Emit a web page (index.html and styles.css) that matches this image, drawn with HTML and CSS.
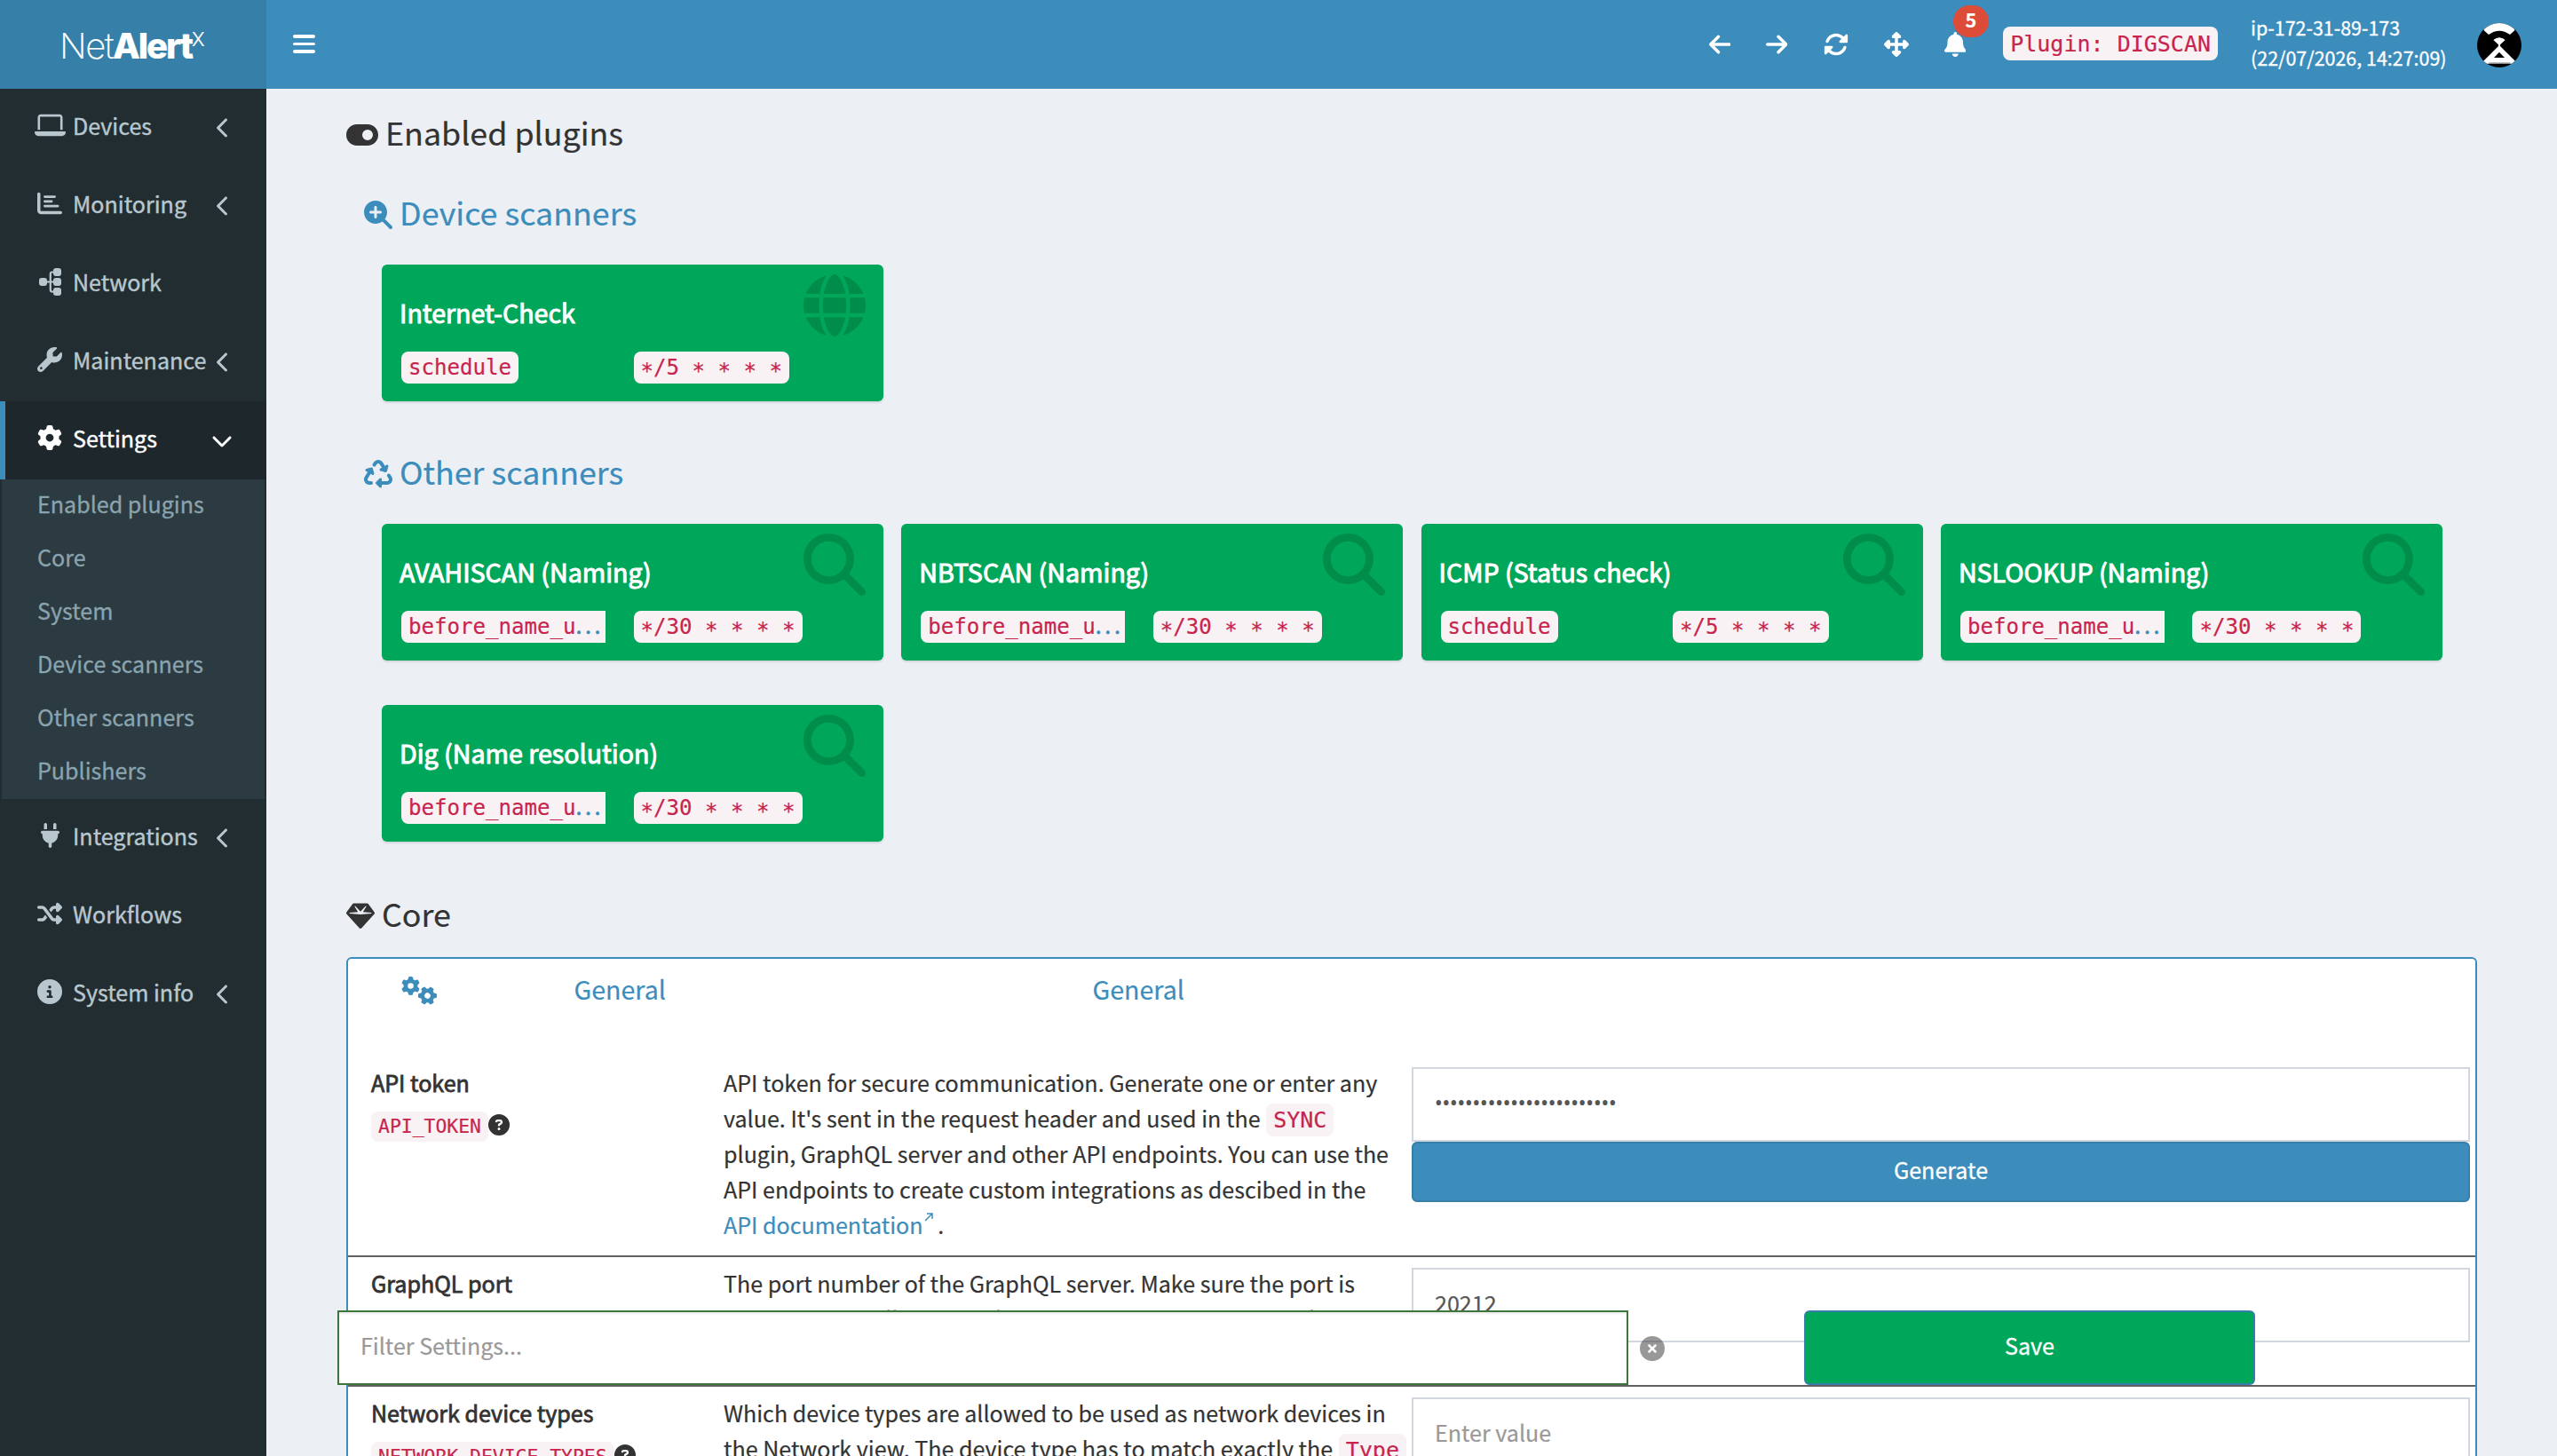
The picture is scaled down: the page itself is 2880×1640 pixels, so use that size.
FILE: index.html
```html
<!DOCTYPE html>
<html lang="en">
<head>
<meta charset="utf-8">
<title>NetAlertX</title>
<link rel="stylesheet" href="styles.css">
</head>
<body>
<svg class="sprite" width="0" height="0">
  <symbol id="laptop" viewBox="0 0 640 512"><path d="M128 32C92.7 32 64 60.7 64 96V352h48V80H528V352h48V96c0-35.3-28.7-64-64-64H128zM19.2 384C8.6 384 0 392.6 0 403.2C0 445.6 34.4 480 76.8 480H563.2c42.4 0 76.8-34.4 76.8-76.8c0-10.6-8.6-19.2-19.2-19.2H19.2z"/></symbol>
  <symbol id="chart" viewBox="0 0 512 512"><path d="M32 32c17.7 0 32 14.3 32 32V400c0 8.8 7.2 16 16 16H480c17.7 0 32 14.3 32 32s-14.3 32-32 32H80c-44.2 0-80-35.8-80-80V64C0 46.3 14.3 32 32 32zM152 96H360a24 24 0 0 1 0 48H152a24 24 0 0 1 0-48zm0 96H296a24 24 0 0 1 0 48H152a24 24 0 0 1 0-48zm0 96H424a24 24 0 0 1 0 48H152a24 24 0 0 1 0-48z"/></symbol>
  <symbol id="network" viewBox="0 0 25 31"><rect y="11" width="9" height="9" rx="3"/><rect x="16" width="9" height="9" rx="3"/><rect x="16" y="11" width="9" height="9" rx="3"/><rect x="16" y="22" width="9" height="9" rx="3"/><path d="M8 15.5h9M17 4.5h-2.2q-2 0-2 2v18q0 2 2 2H17" fill="none" stroke="currentColor" stroke-width="2.2"/></symbol>
  <symbol id="wrench" viewBox="0 0 512 512"><path fill-rule="evenodd" d="M352 320c88.4 0 160-71.6 160-160c0-15.3-2.2-30.1-6.2-44.2c-3.1-10.8-16.4-13.2-24.3-5.3l-76.8 76.8c-3 3-7.1 4.7-11.3 4.7H336c-8.8 0-16-7.2-16-16V118.6c0-4.2 1.7-8.3 4.7-11.3l76.8-76.8c7.9-7.9 5.4-21.2-5.3-24.3C382.1 2.2 367.3 0 352 0C263.6 0 192 71.6 192 160c0 19.1 3.4 37.5 9.5 54.5L19.9 396.1C7.2 408.8 0 426.1 0 444.1C0 481.6 30.4 512 67.9 512c18 0 35.3-7.2 48-19.9L297.5 310.5c17 6.2 35.4 9.5 54.5 9.5zM80 408a24 24 0 1 1 0 48 24 24 0 1 1 0-48z"/></symbol>
  <symbol id="gear" viewBox="0 0 512 512"><path fill-rule="evenodd" d="M495.9 166.6c3.2 8.7 .5 18.4-6.4 24.6l-43.3 39.4c1.1 8.3 1.7 16.8 1.7 25.4s-.6 17.1-1.7 25.4l43.3 39.4c6.9 6.2 9.6 15.9 6.4 24.6c-4.4 11.9-9.7 23.3-15.8 34.3l-4.7 8.1c-6.6 11-14 21.4-22.1 31.2c-5.9 7.2-15.7 9.6-24.5 6.8l-55.7-17.7c-13.4 10.3-28.2 18.9-44 25.4l-12.5 57.1c-2 9.1-9 16.3-18.2 17.8c-13.8 2.3-28 3.5-42.5 3.5s-28.7-1.2-42.5-3.5c-9.2-1.5-16.2-8.7-18.2-17.8l-12.5-57.1c-15.8-6.5-30.6-15.1-44-25.4L83.1 425.9c-8.8 2.8-18.6 .3-24.5-6.8c-8.1-9.8-15.5-20.2-22.1-31.2l-4.7-8.1c-6.1-11-11.4-22.4-15.8-34.3c-3.2-8.7-.5-18.4 6.4-24.6l43.3-39.4C64.6 273.1 64 264.6 64 256s.6-17.1 1.7-25.4L22.4 191.2c-6.9-6.2-9.6-15.9-6.4-24.6c4.4-11.9 9.7-23.3 15.8-34.3l4.7-8.1c6.6-11 14-21.4 22.1-31.2c5.9-7.2 15.7-9.6 24.5-6.8l55.7 17.7c13.4-10.3 28.2-18.9 44-25.4l12.5-57.1c2-9.1 9-16.3 18.2-17.8C227.3 1.2 241.5 0 256 0s28.7 1.2 42.5 3.5c9.2 1.5 16.2 8.7 18.2 17.8l12.5 57.1c15.8 6.5 30.6 15.1 44 25.4l55.7-17.7c8.8-2.8 18.6-.3 24.5 6.8c8.1 9.8 15.5 20.2 22.1 31.2l4.7 8.1c6.1 11 11.4 22.4 15.8 34.3zM256 336a80 80 0 1 0 0-160 80 80 0 1 0 0 160z"/></symbol>
  <symbol id="gears" viewBox="0 0 40 32"><use href="#gear" width="21" height="21"/><g transform="rotate(30 29.5 21.5)"><use href="#gear" x="19" y="11" width="21" height="21"/></g></symbol>
  <symbol id="plug" viewBox="0 0 384 512"><path d="M96 0C78.3 0 64 14.3 64 32v96h64V32c0-17.7-14.3-32-32-32zM288 0c-17.7 0-32 14.3-32 32v96h64V32c0-17.7-14.3-32-32-32zM32 160c-17.7 0-32 14.3-32 32s14.3 32 32 32v32c0 77.4 55 142 128 156.8V480c0 17.7 14.3 32 32 32s32-14.3 32-32V412.8C297 398 352 333.4 352 256V224c17.7 0 32-14.3 32-32s-14.3-32-32-32H32z"/></symbol>
  <symbol id="shuffle" viewBox="0 0 512 512"><path d="M403.8 34.4c12-5 25.7-2.2 34.9 6.9l64 64c6 6 9.4 14.1 9.4 22.6s-3.4 16.6-9.4 22.6l-64 64c-9.2 9.2-22.9 11.9-34.9 6.9s-19.8-16.6-19.8-29.6V160H352c-10.1 0-19.6 4.7-25.6 12.8L284 229.3 244 176l31.2-41.6C293.3 110.2 321.8 96 352 96h32V64c0-12.9 7.8-24.6 19.8-29.6zM164 282.7L204 336l-31.2 41.6C154.7 401.8 126.2 416 96 416H32c-17.7 0-32-14.3-32-32s14.3-32 32-32H96c10.1 0 19.6-4.7 25.6-12.8L164 282.7zm274.6 188c-9.2 9.2-22.9 11.9-34.9 6.9s-19.8-16.6-19.8-29.6V416H352c-30.2 0-58.7-14.2-76.8-38.4L121.6 172.8c-6-8.1-15.5-12.8-25.6-12.8H32c-17.7 0-32-14.3-32-32s14.3-32 32-32H96c30.2 0 58.7 14.2 76.8 38.4L326.4 339.2c6 8.1 15.5 12.8 25.6 12.8h32V320c0-12.9 7.8-24.6 19.8-29.6s25.7-2.2 34.9 6.9l64 64c6 6 9.4 14.1 9.4 22.6s-3.4 16.6-9.4 22.6l-64 64z"/></symbol>
  <symbol id="info" viewBox="0 0 512 512"><path fill-rule="evenodd" d="M256 512A256 256 0 1 0 256 0a256 256 0 1 0 0 512zM216 336h24V272H216c-13.3 0-24-10.7-24-24s10.7-24 24-24h48c13.3 0 24 10.7 24 24v88h8c13.3 0 24 10.7 24 24s-10.7 24-24 24H216c-13.3 0-24-10.7-24-24s10.7-24 24-24zm40-208a32 32 0 1 1 0 64 32 32 0 1 1 0-64z"/></symbol>
  <symbol id="question" viewBox="0 0 512 512"><path fill-rule="evenodd" d="M256 512A256 256 0 1 0 256 0a256 256 0 1 0 0 512zM169.8 165.3c7.9-22.3 29.1-37.3 52.8-37.3h58.3c34.9 0 63.1 28.3 63.1 63.1c0 22.6-12.1 43.5-31.7 54.8L280 264.4c-.2 13-10.9 23.6-24 23.6c-13.3 0-24-10.7-24-24V250.5c0-8.6 4.6-16.5 12.1-20.8l44.3-25.4c4.7-2.7 7.6-7.7 7.6-13.1c0-8.4-6.8-15.1-15.1-15.1H222.6c-3.4 0-6.4 2.1-7.5 5.3l-.4 1.2c-4.4 12.5-18.2 19-30.6 14.6s-19-18.2-14.6-30.6l.4-1.2zM224 352a32 32 0 1 1 64 0 32 32 0 1 1 -64 0z"/></symbol>
  <symbol id="xmark" viewBox="0 0 512 512"><path fill-rule="evenodd" d="M256 512A256 256 0 1 0 256 0a256 256 0 1 0 0 512zM175 175c9.4-9.4 24.6-9.4 33.9 0l47 47 47-47c9.4-9.4 24.6-9.4 33.9 0s9.4 24.6 0 33.9l-47 47 47 47c9.4 9.4 9.4 24.6 0 33.9s-24.6 9.4-33.9 0l-47-47-47 47c-9.4 9.4-24.6 9.4-33.9 0s-9.4-24.6 0-33.9l47-47-47-47c-9.4-9.4-9.4-24.6 0-33.9z"/></symbol>
  <symbol id="left" viewBox="0 0 320 512"><path d="M41.4 233.4c-12.5 12.5-12.5 32.8 0 45.3l192 192c12.5 12.5 32.8 12.5 45.3 0s12.5-32.8 0-45.3L109.3 256 278.6 86.6c12.5-12.5 12.5-32.8 0-45.3s-32.8-12.5-45.3 0l-192 192z"/></symbol>
  <symbol id="down" viewBox="0 0 512 512"><path d="M233.4 406.6c12.5 12.5 32.8 12.5 45.3 0l192-192c12.5-12.5 12.5-32.8 0-45.3s-32.8-12.5-45.3 0L256 338.7 86.6 169.4c-12.5-12.5-32.8-12.5-45.3 0s-12.5 32.8 0 45.3l192 192z"/></symbol>
  <symbol id="arrow" viewBox="0 0 448 512"><path d="M9.4 233.4c-12.5 12.5-12.5 32.8 0 45.3l160 160c12.5 12.5 32.8 12.5 45.3 0s12.5-32.8 0-45.3L109.2 288 416 288c17.7 0 32-14.3 32-32s-14.3-32-32-32l-306.7 0L214.6 118.6c12.5-12.5 12.5-32.8 0-45.3s-32.8-12.5-45.3 0l-160 160z"/></symbol>
  <symbol id="rotate" viewBox="0 0 512 512"><path d="M142.9 142.9c62.2-62.2 162.7-62.5 225.3-1L327 183c-6.9 6.9-8.9 17.2-5.2 26.2s12.5 14.8 22.2 14.8H472c13.3 0 24-10.7 24-24V72c0-9.7-5.8-18.5-14.8-22.2s-19.3-1.7-26.2 5.2L413.4 96.6c-87.6-86.5-228.7-86.2-315.8 1C73.2 122 55.6 150.7 44.8 181.4c-5.9 16.7 2.9 34.9 19.5 40.8s34.9-2.9 40.8-19.5c7.7-21.8 20.2-42.3 37.8-59.8zM16 312V440c0 9.7 5.8 18.5 14.8 22.2s19.3 1.7 26.2-5.2l41.6-41.6c87.6 86.5 228.7 86.2 315.8-1c24.4-24.4 42.1-53.1 52.9-83.7c5.9-16.7-2.9-34.9-19.5-40.8s-34.9 2.9-40.8 19.5c-7.7 21.8-20.2 42.3-37.8 59.8c-62.2 62.2-162.7 62.5-225.3 1L185 329c6.9-6.9 8.9-17.2 5.2-26.2s-12.5-14.8-22.2-14.8H40c-13.3 0-24 10.7-24 24z"/></symbol>
  <symbol id="move" viewBox="0 0 512 512"><path d="M278.6 9.4c-12.5-12.5-32.8-12.5-45.3 0l-64 64c-9.2 9.2-11.9 22.9-6.9 34.9s16.6 19.8 29.6 19.8h32v96H128V192c0-12.9-7.8-24.6-19.8-29.6s-25.7-2.2-34.9 6.9l-64 64c-12.5 12.5-12.5 32.8 0 45.3l64 64c9.2 9.2 22.9 11.9 34.9 6.9s19.8-16.6 19.8-29.6V288h96v96H192c-12.9 0-24.6 7.8-29.6 19.8s-2.2 25.7 6.9 34.9l64 64c12.5 12.5 32.8 12.5 45.3 0l64-64c9.2-9.2 11.9-22.9 6.9-34.9s-16.6-19.8-29.6-19.8H288V288h96v32c0 12.9 7.8 24.6 19.8 29.6s25.7 2.2 34.9-6.9l64-64c12.5-12.5 12.5-32.8 0-45.3l-64-64c-9.2-9.2-22.9-11.9-34.9-6.9s-19.8 16.6-19.8 29.6v32H288V128h32c12.9 0 24.6-7.8 29.6-19.8s2.2-25.7-6.9-34.9l-64-64z"/></symbol>
  <symbol id="bell" viewBox="0 0 448 512"><path d="M224 0c-17.7 0-32 14.3-32 32V51.2C119 66 64 130.6 64 208v18.8c0 47-17.3 92.4-48.5 127.6l-7.4 8.3c-8.4 9.4-10.4 22.9-5.3 34.4S19.4 416 32 416H416c12.6 0 24-7.4 29.2-18.9s3.1-25-5.3-34.4l-7.4-8.3C401.3 319.2 384 273.9 384 226.8V208c0-77.4-55-142-128-156.8V32c0-17.7-14.3-32-32-32zm45.3 493.3c12-12 18.7-28.3 18.7-45.3H224 160c0 17 6.7 33.3 18.7 45.3s28.3 18.7 45.3 18.7s33.3-6.7 45.3-18.7z"/></symbol>
  <symbol id="toggle" viewBox="0 0 576 512"><path fill-rule="evenodd" d="M192 64C86 64 0 150 0 256S86 448 192 448H384c106 0 192-86 192-192s-86-192-192-192H192zm192 96a96 96 0 1 1 0 192 96 96 0 1 1 0-192z"/></symbol>
  <symbol id="zoom-in" viewBox="0 0 512 512"><path fill-rule="evenodd" d="M416 208c0 45.9-14.9 88.3-40 122.7L502.6 457.4c12.5 12.5 12.5 32.8 0 45.3s-32.8 12.5-45.3 0L330.7 376c-34.4 25.2-76.8 40-122.7 40C93.1 416 0 322.9 0 208S93.1 0 208 0S416 93.1 416 208zM184 296c0 13.3 10.7 24 24 24s24-10.7 24-24V232h64c13.3 0 24-10.7 24-24s-10.7-24-24-24H232V120c0-13.3-10.7-24-24-24s-24 10.7-24 24v64H120c-13.3 0-24 10.7-24 24s10.7 24 24 24h64v64z"/></symbol>
  <symbol id="search" viewBox="0 0 512 512"><path fill-rule="evenodd" d="M416 208c0 45.9-14.9 88.3-40 122.7L502.6 457.4c12.5 12.5 12.5 32.8 0 45.3s-32.8 12.5-45.3 0L330.7 376c-34.4 25.2-76.8 40-122.7 40C93.1 416 0 322.9 0 208S93.1 0 208 0S416 93.1 416 208zM208 352a144 144 0 1 0 0-288 144 144 0 1 0 0 288z"/></symbol>
  <symbol id="recycle" viewBox="0 0 512 512"><path d="M174.7 45.1C192.2 17 223 0 256 0s63.8 17 81.3 45.1l38.6 61.7 27-15.6c8.4-4.9 18.9-4.2 26.6 1.7s11.1 15.9 8.6 25.3l-23.4 87.4c-3.4 12.8-16.6 20.4-29.4 17l-87.4-23.4c-9.4-2.5-16.3-10.4-17.6-20s3.4-19.1 11.8-23.9l28.4-16.4L283 79c-5.8-9.3-16-15-27-15s-21.2 5.7-27 15l-17.5 28c-9.2 14.8-28.6 19.5-43.6 10.5c-15.3-9.2-20.2-29.2-10.7-44.4l17.5-28zM429.5 251.9c15-9 34.4-4.3 43.6 10.5l24.4 39.1c9.4 15.1 14.4 32.4 14.6 50.2c.3 53.1-42.7 96.4-95.8 96.4L320 448v32c0 9.7-5.8 18.5-14.8 22.2s-19.3 1.7-26.2-5.2l-64-64c-9.4-9.4-9.4-24.6 0-33.9l64-64c6.9-6.9 17.2-8.9 26.2-5.2s14.8 12.5 14.8 22.2v32l96.2 0c17.6 0 31.9-14.4 31.8-32c0-5.9-1.7-11.7-4.8-16.7l-24.4-39.1c-9.5-15.2-4.7-35.2 10.7-44.4zm-364.6-31L36 204.2c-8.4-4.9-13.1-14.3-11.8-23.9s8.2-17.5 17.6-20l87.4-23.4c12.8-3.4 26 4.2 29.4 17L182 241.2c2.5 9.4-.9 19.3-8.6 25.3s-18.2 6.6-26.6 1.7l-26.5-15.3L68.8 335.3c-3.1 5-4.8 10.8-4.8 16.7c-.1 17.6 14.2 32 31.8 32l32.2 0c17.7 0 32 14.3 32 32s-14.3 32-32 32l-32.2 0C42.7 448-.3 404.8 0 351.6c.1-17.8 5.1-35.1 14.6-50.2l50.3-80.5z"/></symbol>
  <symbol id="gem" viewBox="0 0 512 512"><path fill-rule="evenodd" d="M116.7 33.8c4.5-6.1 11.7-9.8 19.3-9.8H376c7.6 0 14.8 3.6 19.3 9.8l112 152c6.8 9.2 6.1 21.9-1.5 30.4l-232 256c-4.5 5-11 7.9-17.8 7.9s-13.2-2.9-17.8-7.9l-232-256c-7.7-8.5-8.3-21.2-1.5-30.4l112-152zm38.5 39.8c-3.3 2.5-4.2 7-2.1 10.5l57.4 95.6L63.3 192c-4.1 .3-7.3 3.8-7.3 8s3.2 7.6 7.3 8l192 16c.4 0 .9 0 1.3 0l192-16c4.1-.3 7.3-3.8 7.3-8s-3.2-7.6-7.3-8L301.5 179.8l57.4-95.6c2.1-3.5 1.2-8.1-2.1-10.5s-7.9-2-10.7 1L256 172.2 165.9 74.6c-2.8-3-7.4-3.4-10.7-1z"/></symbol>
  <symbol id="globe" viewBox="0 0 512 512"><path d="M352 256c0 22.2-1.2 43.6-3.3 64H163.3c-2.2-20.4-3.3-41.8-3.3-64s1.2-43.6 3.3-64H348.7c2.2 20.4 3.3 41.8 3.3 64zm28.8-64H503.9c5.3 20.5 8.1 41.9 8.1 64s-2.8 43.5-8.1 64H380.8c2.1-20.6 3.2-42 3.2-64s-1.1-43.4-3.2-64zm112.6-32H376.7c-10-63.9-29.8-117.4-55.3-151.6c78.3 20.7 142 77.5 171.9 151.6zm-149.1 0H167.7c6.1-36.4 15.5-68.6 27-94.7c10.5-23.6 22.2-40.7 33.5-51.5C239.4 3.2 248.7 0 256 0s16.6 3.2 27.8 13.8c11.3 10.8 23 27.9 33.5 51.5c11.6 26 20.9 58.2 27 94.7zm-209 0H18.6C48.6 85.9 112.2 29.1 190.6 8.4C165.1 42.6 145.3 96.1 135.3 160zM8.1 192H131.2c-2.1 20.6-3.2 42-3.2 64s1.1 43.4 3.2 64H8.1C2.8 299.5 0 278.1 0 256s2.8-43.5 8.1-64zM194.7 446.6c-11.6-26-20.9-58.2-27-94.6H344.3c-6.1 36.4-15.5 68.6-27 94.6c-10.5 23.6-22.2 40.7-33.5 51.5C272.6 508.8 263.3 512 256 512s-16.6-3.2-27.8-13.8c-11.3-10.8-23-27.9-33.5-51.5zM135.3 352c10 63.9 29.8 117.4 55.3 151.6C112.2 482.9 48.6 426.1 18.6 352H135.3zm358.1 0c-30 74.1-93.6 130.9-171.9 151.6c25.5-34.2 45.2-87.7 55.3-151.6H493.4z"/></symbol>
</svg>

<header class="header">
  <a class="logo"><span class="logo-net">Net</span><span class="logo-alert">Alert</span><span class="logo-x">X</span></a>
  <div class="navbar">
    <div class="burger"><i></i><i></i><i></i></div>
    <nav class="tools">
      <svg class="t-arrow"><use href="#arrow"/></svg>
      <svg class="t-arrow flip"><use href="#arrow"/></svg>
      <svg class="t-icon"><use href="#rotate"/></svg>
      <svg class="t-icon"><use href="#move"/></svg>
      <span class="bell"><svg class="t-bell"><use href="#bell"/></svg><b class="badge">5</b></span>
    </nav>
    <code class="code status">Plugin: DIGSCAN</code>
    <div class="host">ip-172-31-89-173<br>(22/07/2026, 14:27:09)</div>
    <svg class="avatar" viewBox="0 0 150 150"><defs><clipPath id="disc"><circle cx="75" cy="75" r="75"/></clipPath></defs><g clip-path="url(#disc)"><rect width="150" height="150"/><path fill="#fff" d="M23 25V-5H127V25L111 39Q75 13 39 39zM55 57Q75 40 95 57L78 73V78L130 130L122 137H30L20 130L72 78V73z"/><path d="M75 98L93 117H57zM40 134H112V136H40z"/></g></svg>
  </div>
</header>

<div class="wrapper">
  <aside class="sidebar">
    <a class="item"><span class="ico"><svg width="35" height="28"><use href="#laptop"/></svg></span>Devices<svg class="chev"><use href="#left"/></svg></a>
    <a class="item"><span class="ico"><svg width="28" height="28"><use href="#chart"/></svg></span>Monitoring<svg class="chev"><use href="#left"/></svg></a>
    <a class="item"><span class="ico"><svg width="25" height="31"><use href="#network"/></svg></span>Network</a>
    <a class="item"><span class="ico"><svg width="28" height="28"><use href="#wrench"/></svg></span>Maintenance<svg class="chev"><use href="#left"/></svg></a>
    <a class="item active"><span class="ico"><svg width="28" height="28"><use href="#gear"/></svg></span>Settings<svg class="chev"><use href="#down"/></svg></a>
    <div class="submenu">
      <a>Enabled plugins</a><a>Core</a><a>System</a><a>Device scanners</a><a>Other scanners</a><a>Publishers</a>
    </div>
    <a class="item"><span class="ico"><svg width="21" height="28"><use href="#plug"/></svg></span>Integrations<svg class="chev"><use href="#left"/></svg></a>
    <a class="item"><span class="ico"><svg width="28" height="28"><use href="#shuffle"/></svg></span>Workflows</a>
    <a class="item"><span class="ico"><svg width="28" height="28"><use href="#info"/></svg></span>System info<svg class="chev"><use href="#left"/></svg></a>
  </aside>

  <main class="content">
    <h2 class="title"><svg width="36" height="32"><use href="#toggle"/></svg>Enabled plugins</h2>

    <h3 class="title group"><svg width="32" height="32"><use href="#zoom-in"/></svg>Device scanners</h3>
    <div class="cards">
      <div class="card"><svg class="ghost"><use href="#globe"/></svg><h4>Internet-Check</h4><div class="meta"><code class="code">schedule</code><code class="code"><span class="star">*</span>/5 <span class="star">*</span> <span class="star">*</span> <span class="star">*</span> <span class="star">*</span></code></div></div>
    </div>

    <h3 class="title group second"><svg width="32" height="32"><use href="#recycle"/></svg>Other scanners</h3>
    <div class="cards">
      <div class="card"><svg class="ghost"><use href="#search"/></svg><h4>AVAHISCAN (Naming)</h4><div class="meta"><code class="code cut">before_name_u<span class="dots">...</span></code><code class="code"><span class="star">*</span>/30 <span class="star">*</span> <span class="star">*</span> <span class="star">*</span> <span class="star">*</span></code></div></div>
      <div class="card"><svg class="ghost"><use href="#search"/></svg><h4>NBTSCAN (Naming)</h4><div class="meta"><code class="code cut">before_name_u<span class="dots">...</span></code><code class="code"><span class="star">*</span>/30 <span class="star">*</span> <span class="star">*</span> <span class="star">*</span> <span class="star">*</span></code></div></div>
      <div class="card"><svg class="ghost"><use href="#search"/></svg><h4>ICMP (Status check)</h4><div class="meta"><code class="code">schedule</code><code class="code"><span class="star">*</span>/5 <span class="star">*</span> <span class="star">*</span> <span class="star">*</span> <span class="star">*</span></code></div></div>
      <div class="card"><svg class="ghost"><use href="#search"/></svg><h4>NSLOOKUP (Naming)</h4><div class="meta"><code class="code cut">before_name_u<span class="dots">...</span></code><code class="code"><span class="star">*</span>/30 <span class="star">*</span> <span class="star">*</span> <span class="star">*</span> <span class="star">*</span></code></div></div>
      <div class="card"><svg class="ghost"><use href="#search"/></svg><h4>Dig (Name resolution)</h4><div class="meta"><code class="code cut">before_name_u<span class="dots">...</span></code><code class="code"><span class="star">*</span>/30 <span class="star">*</span> <span class="star">*</span> <span class="star">*</span> <span class="star">*</span></code></div></div>
    </div>

    <h2 class="title core"><svg width="32" height="32"><use href="#gem"/></svg>Core</h2>
    <section class="panel">
      <div class="panel-head"><svg width="40" height="32"><use href="#gears"/></svg><span>General</span><span>General</span></div>
      <div class="row first">
        <div class="label"><b>API token</b><div class="key"><code class="code small">API_TOKEN</code><svg width="24" height="24"><use href="#question"/></svg></div></div>
        <div class="desc">API token for secure communication. Generate one or enter any<br>value. It's sent in the request header and used in the <code class="code">SYNC</code><br>plugin, GraphQL server and other API endpoints. You can use the<br>API endpoints to create custom integrations as descibed in the<br><a class="link">API documentation<svg class="ext" viewBox="0 0 10 10"><path d="M1 9L8.5 1.5M3 1H9V7" fill="none" stroke="currentColor" stroke-width="1.5"/></svg></a> .</div>
        <div class="field"><div class="input secret">••••••••••••••••••••••••</div><div class="btn">Generate</div></div>
      </div>
      <div class="row port">
        <div class="label"><b>GraphQL port</b></div>
        <div class="desc">The port number of the GraphQL server. Make sure the port is<br>unique across all your applications on this host and NetAlertX</div>
        <div class="field"><div class="input">20212</div></div>
      </div>
      <div class="row types">
        <div class="label"><b>Network device types</b><div class="key"><code class="code small">NETWORK_DEVICE_TYPES</code><svg width="24" height="24"><use href="#question"/></svg></div></div>
        <div class="desc">Which device types are allowed to be used as network devices in<br>the Network view. The device type has to match exactly the <code class="code">Type</code></div>
        <div class="field"><div class="input hint">Enter value</div></div>
      </div>
    </section>
  </main>
</div>

<div class="savebar">
  <div class="filter">Filter Settings...</div>
  <svg class="clear"><use href="#xmark"/></svg>
  <div class="save">Save</div>
</div>
</body>
</html>
```
FILE: styles.css
```css
* { box-sizing: border-box; }
body {
  margin: 0;
  height: 1640px;
  overflow: hidden;
  background: #ecf0f5;
  color: #333;
  font-family: "Noto Sans CJK SC", "Noto Sans", sans-serif;
  font-size: 25.07px;
  line-height: 40px;
  -webkit-text-stroke: .2px;
}
svg { fill: currentColor; flex: none; display: block; }
.sprite { position: absolute; }

.code {
  font-family: "DejaVu Sans Mono", monospace;
  font-size: 25px;
  color: #c7254e;
  background: #f9f2f4;
  border-radius: 8px;
  padding: 4px 8px;
  white-space: pre;
}

/* header */
.header { display: flex; height: 100px; color: #fff; }
.logo {
  width: 300px;
  background: #367fa9;
  display: flex;
  padding: 27px 0 0 67px;
  font-family: Inter, sans-serif;
  font-size: 40px;
  line-height: 50px;
}
.logo-net { font-weight: 200; letter-spacing: -1.5px; }
.logo-alert { font-weight: 800; letter-spacing: -2px; }
.logo-x { font-weight: 300; font-size: 22px; line-height: 34px; }
.navbar { flex: 1; background: #3c8dbc; display: flex; padding-right: 40px; }
.burger { width: 25px; margin: 39px 0 0 30px; display: flex; flex-direction: column; gap: 4.7px; }
.burger i { height: 3.9px; border-radius: 2px; background: #fff; }
.tools { display: flex; height: 100px; align-items: center; margin-left: auto; gap: 40px; padding-right: 42px; }
.t-arrow { width: 24.5px; height: 28px; }
.flip { transform: scaleX(-1); }
.t-icon { width: 28px; height: 28px; }
.bell { position: relative; }
.t-bell { width: 24.5px; height: 28px; }
.badge {
  position: absolute;
  left: 10px;
  top: -30px;
  width: 40px;
  height: 36px;
  border-radius: 18px;
  background: #dd4b39;
  font-size: 21.5px;
  line-height: 31px;
  text-align: center;
}
.status { height: 38px; margin-top: 30px; line-height: 31px; }
.host { margin-left: 37px; padding-top: 14px; font-size: 21.45px; line-height: 34px; width: 255px; white-space: nowrap; -webkit-text-stroke: .3px; }
.avatar { width: 50px; height: 50px; margin-top: 26px; fill: #000; }

/* sidebar */
.wrapper { display: flex; height: 1540px; overflow: hidden; }
.sidebar { width: 300px; background: #222d32; color: #b8c7ce; -webkit-text-stroke: .4px; }
.item { display: flex; align-items: center; height: 88px; padding: 0 39px 6px 0; border-left: 6px solid transparent; white-space: nowrap; }
.ico { width: 40px; margin: 0 6px 0 30px; display: flex; justify-content: center; }
.chev { width: 24px; height: 24px; margin: 6px -1px 0 auto; }
.active { background: #1e282c; border-color: #3c8dbc; color: #fff; }
.submenu { margin: 0 2px; background: #2c3b41; color: #8aa4af; -webkit-text-stroke: .3px; }
.submenu a { display: block; height: 60px; line-height: 55px; padding-left: 40px; }

/* content */
.content { flex: 1; padding: 18px 90px 0; }
.title { display: flex; align-items: center; gap: 8px; margin: 0; height: 60px; line-height: 60px; font-size: 35.8px; font-weight: 400; }
.title svg { margin-top: 7px; }
.group { margin: 30px 0 30px 20px; color: #3c8dbc; }
.second { margin-top: 48px; }
.core { margin: 50px 0 20px; }
.cards { display: grid; grid-template-columns: repeat(4, 565px); gap: 50px 20.3px; padding-left: 40px; }
.card { position: relative; height: 154px; padding: 34px 20px 0; background: #00a65a; border-radius: 6px; box-shadow: 0 2px 2px rgba(0, 0, 0, .1); }
.card h4 { margin: 0; font-size: 28.6px; font-weight: 400; color: #fff; -webkit-text-stroke: 1px; }
.ghost { position: absolute; top: 10.5px; right: 20px; width: 70px; height: 70px; color: rgba(0, 0, 0, .15); }
.meta { display: grid; grid-template-columns: 1fr 1fr; justify-items: start; margin-top: 24px; padding-left: 2px; }
.card .code { height: 36px; font-size: 24.08px; line-height: 28px; }
.card .cut { width: 230px; border-radius: 8px 0 0 8px; }
.dots { font-family: "Noto Sans CJK SC", sans-serif; font-size: 25.07px; line-height: 0; letter-spacing: 3.6px; color: #3c8dbc; -webkit-text-stroke: .6px; }
.star { vertical-align: -.18em; line-height: 0; }

/* settings panel */
.panel { height: 700px; background: #fff; border: 2px solid #3c8dbc; border-radius: 6px; }
.panel-head { display: grid; grid-template-columns: 194.5px 584px 1fr; height: 110px; padding: 14px 0 0 60px; color: #3c8dbc; font-size: 28.6px; }
.panel-head svg { margin-top: 6px; }
.row { display: grid; grid-template-columns: 397px 775px 1192px; padding-left: 26px; border-bottom: 2px solid #606060; }
.first { height: 226px; }
.port { height: 146px; }
.types { height: 200px; }
.label, .desc { padding-top: 9px; white-space: nowrap; }
.desc .code { line-height: 1; margin-left: 1px; }
.label b { font-weight: 400; -webkit-text-stroke: .8px; }
.key { display: flex; align-items: center; margin-top: 13px; }
.key svg { margin-top: -4px; }
.small { font-size: 21.4px; line-height: 26px; }
.link { color: #3c8dbc; }
.ext { display: inline-block; width: 10px; height: 10px; vertical-align: 14px; margin-left: 1px; }
.field { padding-top: 12px; }
.input { height: 84px; line-height: 75px; padding-left: 24px; border: 2px solid #d2d6de; background: #fff; color: #555; }
.secret { font-family: "Noto Sans", sans-serif; font-size: 23px; line-height: 77px; letter-spacing: -.13px; }
.hint { color: #999; }
.btn { height: 68px; line-height: 59px; border: 2px solid #367fa9; border-radius: 6px; background: #3c8dbc; color: #fff; text-align: center; -webkit-text-stroke: .3px; }

/* floating filter bar */
.savebar { position: absolute; left: 380px; top: 1476px; display: flex; height: 84px; line-height: 75px; }
.filter { width: 1454px; padding-left: 24px; background: #fff; border: 2px solid #3c763d; box-shadow: inset 0 2px 2px rgba(0, 0, 0, .075); color: #999; }
.clear { width: 28px; height: 28px; margin: 29px 157px 0 13px; color: #333; opacity: .5; }
.save { width: 508px; border: 2px solid #367fa9; border-radius: 6px; background: #00a65a; color: #fff; text-align: center; -webkit-text-stroke: .3px; }
```
